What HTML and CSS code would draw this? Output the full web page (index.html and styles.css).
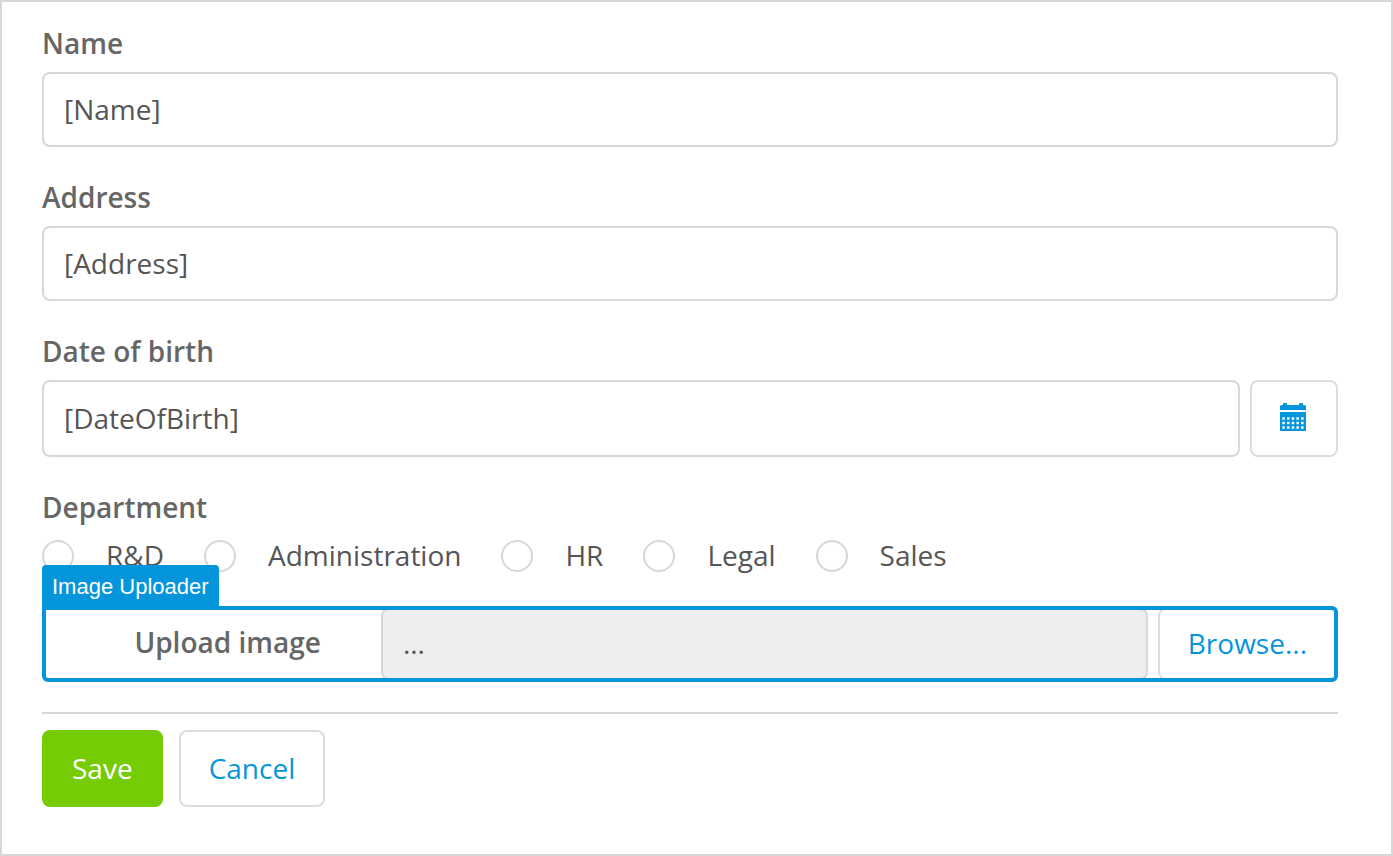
FILE: index.html
```html
<!DOCTYPE html>
<html lang="en">
<head>
<meta charset="utf-8">
<meta name="viewport" content="width=device-width, initial-scale=1">
<title>Employee form</title>
<link rel="stylesheet" href="styles.css">
</head>
<body>
<form class="form">
  <div class="group">
    <label class="label" for="name">Name</label>
    <input class="control" id="name" type="text" value="[Name]">
  </div>
  <div class="group">
    <label class="label" for="address">Address</label>
    <input class="control" id="address" type="text" value="[Address]">
  </div>
  <div class="group">
    <label class="label" for="birth">Date of birth</label>
    <div class="date">
      <input class="control" id="birth" type="text" value="[DateOfBirth]">
      <button class="button button-icon" type="button" aria-label="Pick a date">
        <svg class="calendar" viewBox="0 0 26 28" aria-hidden="true">
          <path fill="currentColor" fill-rule="evenodd" d="M0 7V3.500Q0 2 1.500 2H3V1Q3 0 4 0H6Q7 0 7 1V2H19V1Q19 0 20 0H22Q23 0 23 1V2H24.500Q26 2 26 3.500V7ZM0 9H26V28H0ZM2.300 14.300v2.500h2.500v-2.500ZM7 14.300v2.500h2.500v-2.500ZM11.700 14.300v2.500h2.500v-2.500ZM16.400 14.300v2.500h2.500v-2.500ZM21.100 14.300v2.500h2.500v-2.500ZM2.300 18.800v2.500h2.500v-2.500ZM7 18.800v2.500h2.500v-2.500ZM11.700 18.800v2.500h2.500v-2.500ZM16.400 18.800v2.500h2.500v-2.500ZM21.100 18.800v2.500h2.500v-2.500ZM2.300 23.300v2.500h2.500v-2.500ZM7 23.300v2.500h2.500v-2.500ZM11.700 23.300v2.500h2.500v-2.500ZM16.400 23.300v2.500h2.500v-2.500ZM21.100 23.300v2.500h2.500v-2.500Z"/>
        </svg>
      </button>
    </div>
  </div>
  <fieldset class="department">
    <legend class="label">Department</legend>
    <div class="options">
      <label class="option"><input class="radio" type="radio" name="department">R&amp;D</label>
      <label class="option"><input class="radio" type="radio" name="department">Administration</label>
      <label class="option"><input class="radio" type="radio" name="department">HR</label>
      <label class="option"><input class="radio" type="radio" name="department">Legal</label>
      <label class="option"><input class="radio" type="radio" name="department">Sales</label>
    </div>
  </fieldset>
  <div class="selected">
    <span class="tag">Image Uploader</span>
    <div class="uploader">
      <label class="upload-label" for="upload">Upload image</label>
      <input class="control upload-name" id="upload" type="text" value="..." readonly>
      <button class="button browse" type="button">Browse...</button>
    </div>
  </div>
  <div class="actions">
    <button class="button save" type="submit">Save</button>
    <button class="button" type="button">Cancel</button>
  </div>
</form>
</body>
</html>
```
FILE: styles.css
```css
* {
  box-sizing: border-box;
}

body {
  margin: 0;
  background: #fff;
  color: #555;
  font: 28px/40px "Open Sans", sans-serif;
}

.form {
  min-height: 100vh;
  padding: 21px 53px 47px 40px;
  border: 2px solid #d7d7d7;
}

.group {
  margin-bottom: 30px;
}

.label {
  display: block;
  margin-bottom: 9px;
  padding: 0;
  color: #666;
  font-weight: 600;
}

.control {
  display: block;
  width: 100%;
  min-width: 0;
  height: 75px;
  padding: 0 20px 2px;
  border: 2px solid #d7d7d7;
  border-radius: 8px;
  background: #fff;
  color: #555;
  font: inherit;
}

.date {
  display: flex;
  gap: 10px;
}

.date .control {
  flex: 1;
  height: 77px;
}

.button {
  height: 77px;
  padding: 0 28px 2px;
  border: 2px solid #ddd;
  border-radius: 8px;
  background: #fff;
  color: #0595db;
  font: inherit;
}

.button-icon {
  display: flex;
  align-items: center;
  padding: 0 30px 3px 28px;
}

.calendar {
  display: block;
  width: 26px;
  height: 28px;
}

.department {
  margin: 0;
  padding: 0;
  border: 0;
}

.options {
  display: flex;
  flex-wrap: wrap;
  gap: 10px 40px;
}

.option {
  display: flex;
  align-items: center;
  gap: 32px;
  line-height: 38px;
}

.radio {
  appearance: none;
  width: 32px;
  height: 32px;
  margin: 2px 0 0;
  border: 2px solid #d7d7d7;
  border-radius: 50%;
  background: #fff;
}

.selected {
  position: relative;
  margin-top: 32px;
}

.tag {
  position: absolute;
  bottom: 100%;
  left: 0;
  height: 41px;
  padding: 0 10px;
  border-radius: 4px 4px 0 0;
  background: #0595db;
  color: #fff;
  font: 22px/44px "Liberation Sans", Arial, sans-serif;
  white-space: nowrap;
}

.uploader {
  display: flex;
  height: 76px;
  overflow: hidden;
  border: 4px solid #0595db;
  border-radius: 0 6px 6px 6px;
}

.upload-label {
  flex: 0 0 26%;
  padding: 12px 60px 0 0;
  color: #666;
  font-weight: 600;
  text-align: right;
}

.upload-name {
  flex: 1;
  height: 72px;
  margin: -2px 10px -2px 0;
  background: #eee;
}

.browse {
  height: 72px;
  margin: -2px -3px -2px 0;
}

.actions {
  display: flex;
  gap: 16px;
  margin-top: 30px;
  padding-top: 16px;
  border-top: 2px solid #d7d7d7;
}

.save {
  border-color: #76cc04;
  background: #76cc04;
  color: #fff;
}
```
